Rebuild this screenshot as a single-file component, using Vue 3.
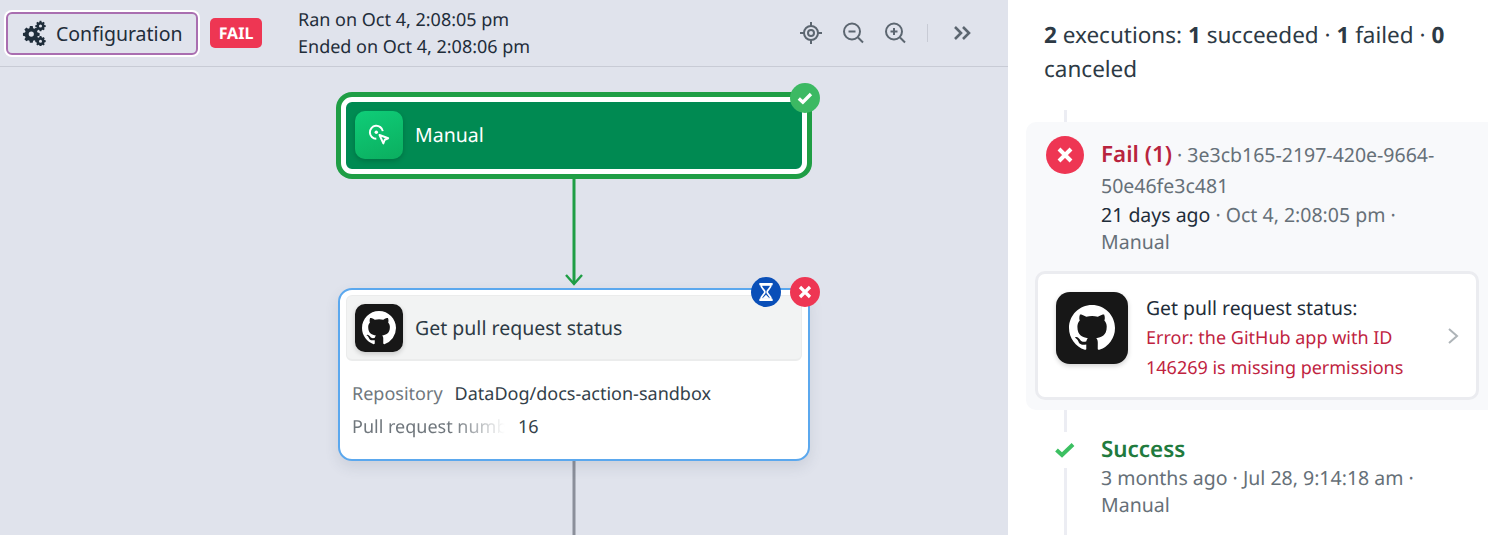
<template>
  <div class="page">
    <div class="left">
      <div class="topbar">
        <button class="config-btn">
          <svg width="26" height="26" viewBox="0 0 24 24" fill="#1f2d3a">
            <path fill-rule="evenodd" d="M8.2 5.6h2.6l.4 1.9 1.2.5 1.6-1.1 1.9 1.9-1.1 1.6.5 1.2 1.9.4v2.6l-1.9.4-.5 1.2 1.1 1.6-1.9 1.9-1.6-1.1-1.2.5-.4 1.9H8.2l-.4-1.9-1.2-.5-1.6 1.1-1.9-1.9 1.1-1.6-.5-1.2-1.9-.4v-2.6l1.9-.4.5-1.2L3.1 8.8 5 6.9l1.6 1.1 1.2-.5zM9.5 10.6a2.4 2.4 0 1 0 0 4.8 2.4 2.4 0 0 0 0-4.8z" />
            <path fill-rule="evenodd" d="M17.2.8h1.6l.3 1.2.7.3 1-.6 1.1 1.1-.6 1 .3.7 1.2.3v1.6l-1.2.3-.3.7.6 1-1.1 1.1-1-.6-.7.3-.3 1.2h-1.6l-.3-1.2-.7-.3-1 .6-1.1-1.1.6-1-.3-.7-1.2-.3V4.8l1.2-.3.3-.7-.6-1 1.1-1.1 1 .6.7-.3zM18 4.2a1.4 1.4 0 1 0 0 2.8 1.4 1.4 0 0 0 0-2.8z" />
            <path fill-rule="evenodd" d="M17.2 14.8h1.6l.3 1.2.7.3 1-.6 1.1 1.1-.6 1 .3.7 1.2.3v1.6l-1.2.3-.3.7.6 1-1.1 1.1-1-.6-.7.3-.3.7h-1.6l-.3-.7-.7-.3-1 .6-1.1-1.1.6-1-.3-.7-1.2-.3v-1.6l1.2-.3.3-.7-.6-1 1.1-1.1 1 .6.7-.3zM18 18.2a1.4 1.4 0 1 0 0 2.8 1.4 1.4 0 0 0 0-2.8z" />
          </svg>
          <span>Configuration</span>
        </button>
        <span class="fail-tag">FAIL</span>
        <div class="times">
          <div>Ran on Oct 4, 2:08:05 pm</div>
          <div>Ended on Oct 4, 2:08:06 pm</div>
        </div>
        <div class="tools">
          <svg width="24" height="24" viewBox="0 0 24 24" fill="none" stroke="#5c6670" stroke-width="2">
            <circle cx="12" cy="12" r="7" />
            <circle cx="12" cy="12" r="3" />
            <path d="M12 1v4M12 19v4M1 12h4M19 12h4" />
          </svg>
          <svg width="24" height="24" viewBox="0 0 24 24" fill="none" stroke="#5c6670" stroke-width="2">
            <circle cx="11" cy="10.5" r="8" />
            <path d="M7.5 10.5h7M17 16.5l5 5" />
          </svg>
          <svg width="24" height="24" viewBox="0 0 24 24" fill="none" stroke="#5c6670" stroke-width="2">
            <circle cx="11" cy="10.5" r="8" />
            <path d="M7.5 10.5h7M11 7v7M17 16.5l5 5" />
          </svg>
          <span class="tool-sep"></span>
          <svg width="20" height="20" viewBox="0 0 20 20" fill="none" stroke="#5c6670" stroke-width="2.6">
            <path d="M3 4l6 6-6 6M11 4l6 6-6 6" />
          </svg>
        </div>
      </div>

      <div class="canvas">
        <svg class="edges" width="1008" height="468" viewBox="0 0 1008 468">
          <path d="M574 111v105" stroke="#1f9e45" stroke-width="3" fill="none" />
          <path d="M566 208l8 9 8-9" stroke="#1f9e45" stroke-width="2.4" fill="none" />
          <path d="M574 393v75" stroke="#8b8f9a" stroke-width="3" fill="none" />
        </svg>

        <div class="node trigger">
          <div class="trigger-inner">
            <div class="app-icon green">
              <svg width="26" height="26" viewBox="0 0 24 24" fill="none" stroke="#fff" stroke-width="1.8">
                <path d="M9.5 15.5a6 6 0 1 1 6-7" />
                <circle cx="9.5" cy="9.5" r="1.6" fill="#fff" stroke="none" />
                <path d="M12.5 12l8 3-3.2 1.4-1.3 3.4z" stroke-linejoin="round" />
              </svg>
            </div>
            <span>Manual</span>
          </div>
          <span class="badge check">
            <svg width="18" height="18" viewBox="0 0 16 16" fill="none" stroke="#fff" stroke-width="3">
              <path d="M2.5 8.5l3.6 3.2 7.2-7.2" />
            </svg>
          </span>
        </div>

        <div class="node action">
          <div class="action-head">
            <div class="app-icon dark">
              <svg width="34" height="34" viewBox="0 0 16 16" fill="#fff">
                <path d="M8 0C3.58 0 0 3.58 0 8c0 3.54 2.29 6.53 5.47 7.59.4.07.55-.17.55-.38 0-.19-.01-.82-.01-1.49-2.01.37-2.53-.49-2.69-.94-.09-.23-.48-.94-.82-1.13-.28-.15-.68-.52-.01-.53.63-.01 1.08.58 1.23.82.72 1.21 1.87.87 2.33.66.07-.52.28-.87.51-1.07-1.78-.2-3.64-.89-3.64-3.95 0-.87.31-1.59.82-2.15-.08-.2-.36-1.02.08-2.12 0 0 .67-.21 2.2.82.64-.18 1.32-.27 2-.27s1.36.09 2 .27c1.53-1.04 2.2-.82 2.2-.82.44 1.1.16 1.92.08 2.12.51.56.82 1.27.82 2.15 0 3.07-1.87 3.75-3.65 3.95.29.25.54.73.54 1.48 0 1.07-.01 1.93-.01 2.2 0 .21.15.46.55.38A8.01 8.01 0 0 0 16 8c0-4.42-3.58-8-8-8z" />
              </svg>
            </div>
            <span>Get pull request status</span>
          </div>
          <div class="params">
            <div class="param">
              <span class="param-key">Repository</span>
              <span class="param-val">DataDog/docs-action-sandbox</span>
            </div>
            <div class="param">
              <span class="param-key faded">Pull request number</span>
              <span class="param-val">16</span>
            </div>
          </div>
          <span class="badge wait">
            <svg width="20" height="20" viewBox="0 0 18 18" fill="none" stroke="#fff" stroke-width="2">
              <path d="M3 2h12M3 16h12" />
              <path d="M4.5 2.5c0 3.5 3.5 4.5 3.5 6.5s-3.5 3-3.5 6.5h9c0-3.5-3.5-4.5-3.5-6.5s3.5-3 3.5-6.5z" stroke-width="1.6" />
              <path d="M5.5 15L9 11.5l3.5 3.5z" fill="#fff" stroke="none" />
            </svg>
          </span>
          <span class="badge err">
            <svg width="16" height="16" viewBox="0 0 16 16" fill="none" stroke="#fff" stroke-width="3.2">
              <path d="M3 3l10 10M13 3L3 13" />
            </svg>
          </span>
        </div>
      </div>
    </div>

    <div class="right">
      <span class="rail"></span>
      <h2 class="summary"><b>2</b> executions: <b>1</b> succeeded · <b>1</b> failed · <b>0</b> canceled</h2>

      <section class="run failed">
        <div class="run-row">
          <span class="status-dot">
            <svg width="20" height="20" viewBox="0 0 16 16" fill="none" stroke="#fff" stroke-width="3.2">
              <path d="M3.2 3.2l9.6 9.6M12.8 3.2l-9.6 9.6" />
            </svg>
          </span>
          <div class="run-text failed-text">
            <div class="id-line"><b class="red">Fail (1)</b> · 3e3cb165-2197-420e-9664-50e46fe3c481</div>
            <div class="when"><span class="dark-text">21 days ago</span> · Oct 4, 2:08:05 pm · Manual</div>
          </div>
        </div>
        <div class="err-card">
          <div class="err-icon">
            <svg width="46" height="46" viewBox="0 0 16 16" fill="#fff">
              <path d="M8 0C3.58 0 0 3.58 0 8c0 3.54 2.29 6.53 5.47 7.59.4.07.55-.17.55-.38 0-.19-.01-.82-.01-1.49-2.01.37-2.53-.49-2.69-.94-.09-.23-.48-.94-.82-1.13-.28-.15-.68-.52-.01-.53.63-.01 1.08.58 1.23.82.72 1.21 1.87.87 2.33.66.07-.52.28-.87.51-1.07-1.78-.2-3.64-.89-3.64-3.95 0-.87.31-1.59.82-2.15-.08-.2-.36-1.02.08-2.12 0 0 .67-.21 2.2.82.64-.18 1.32-.27 2-.27s1.36.09 2 .27c1.53-1.04 2.2-.82 2.2-.82.44 1.1.16 1.92.08 2.12.51.56.82 1.27.82 2.15 0 3.07-1.87 3.75-3.65 3.95.29.25.54.73.54 1.48 0 1.07-.01 1.93-.01 2.2 0 .21.15.46.55.38A8.01 8.01 0 0 0 16 8c0-4.42-3.58-8-8-8z" />
            </svg>
          </div>
          <div class="err-text">
            <div class="err-title">Get pull request status:</div>
            <div class="err-msg">Error: the GitHub app with ID 146269 is missing permissions</div>
          </div>
          <svg class="chev" width="14" height="20" viewBox="0 0 14 20" fill="none" stroke="#aeb4b8" stroke-width="2">
            <path d="M3 3l8 7-8 7" />
          </svg>
        </div>
      </section>

      <section class="run ok">
        <div class="run-row">
          <span class="status-check">
            <svg width="20" height="16" viewBox="0 0 20 16" fill="none" stroke="#3cc062" stroke-width="4">
              <path d="M1.5 8l5.5 5 11-10.5" />
            </svg>
          </span>
          <div class="run-text">
            <div class="success">Success</div>
            <div>3 months ago · Jul 28, 9:14:18 am · Manual</div>
          </div>
        </div>
      </section>
    </div>
  </div>
</template>

<script setup>
</script>

<style>
html, body {
  margin: 0;
  overflow: hidden;
}
</style>

<style scoped>
.page {
  display: flex;
  width: 1488px;
  height: 535px;
  overflow: hidden;
  font-family: "Noto Sans", sans-serif;
  color: #1f2d3a;
  background: #fff;
  text-rendering: geometricPrecision;
}
.left {
  width: 1008px;
  flex-shrink: 0;
  background: #e0e3ec;
}
.topbar {
  display: flex;
  align-items: center;
  height: 66px;
  padding: 0 0 0 6px;
  border-bottom: 1px solid #c8cbd5;
}
.config-btn {
  display: flex;
  align-items: center;
  gap: 9px;
  width: 192px;
  height: 43px;
  margin-right: 12px;
  padding: 0 0 0 13px;
  box-sizing: border-box;
  border: 2px solid #a96eb0;
  border-radius: 6px;
  box-shadow: 0 0 0 2px #fff;
  background: #e0e3ec;
  color: #1f2d3a;
  font: 19.5px "Noto Sans", sans-serif;
}
.fail-tag {
  width: 52px;
  height: 30px;
  line-height: 30px;
  text-align: center;
  border-radius: 5px;
  background: #ee3653;
  color: #fff;
  font-size: 16px;
  font-weight: 700;
}
.times {
  margin-left: 36px;
  padding-top: 2px;
  font-size: 18px;
  line-height: 27px;
}
.tools {
  display: flex;
  align-items: center;
  gap: 18px;
  margin-left: auto;
  margin-right: 36px;
}
.tool-sep {
  width: 1px;
  height: 18px;
  background: #c8cbd5;
  margin: 0 6px 0 2px;
}
.canvas {
  position: relative;
  height: 468px;
}
.edges {
  position: absolute;
  left: 0;
  top: 0;
}
.node {
  position: absolute;
  box-sizing: border-box;
}
.trigger {
  left: 336px;
  top: 25px;
  width: 476px;
  height: 87px;
  padding: 5px;
  border-radius: 16px;
  background: #1f9e45;
}
.trigger-inner {
  display: flex;
  align-items: center;
  gap: 12px;
  height: 100%;
  padding-left: 9px;
  padding-bottom: 2px;
  box-sizing: border-box;
  border: 5px solid #fff;
  border-radius: 11px;
  background: #008a52;
  color: #fff;
  font-size: 19.5px;
}
.app-icon {
  display: flex;
  align-items: center;
  justify-content: center;
  width: 48px;
  height: 48px;
  flex-shrink: 0;
  border-radius: 10px;
  box-shadow: 0 2px 5px rgba(0, 0, 0, 0.18);
}
.app-icon.green {
  background: linear-gradient(160deg, #0fcd78, #0bae5f);
}
.app-icon.dark {
  background: #171717;
}
.badge {
  position: absolute;
  display: flex;
  align-items: center;
  justify-content: center;
  width: 30px;
  height: 30px;
  border-radius: 50%;
}
.badge.check {
  right: -8px;
  top: -9px;
  background: #3cb963;
}
.badge.wait {
  right: 27px;
  top: -13px;
  background: #0a4fb8;
}
.badge.err {
  right: -12px;
  top: -13px;
  background: #ee3653;
}
.action {
  left: 338px;
  top: 221px;
  width: 472px;
  height: 173px;
  padding: 5px 6px;
  border: 2px solid #5ba8ee;
  border-radius: 14px;
  background: #fff;
  box-shadow: 0 6px 14px rgba(60, 70, 100, 0.12);
}
.action-head {
  display: flex;
  align-items: center;
  gap: 12px;
  height: 66px;
  padding-left: 8px;
  box-sizing: border-box;
  border: 1px solid #ebecec;
  border-bottom-width: 2px;
  border-radius: 6px;
  background: #f2f3f3;
  color: #2d3a45;
  font-size: 19.5px;
}
.params {
  padding: 17px 0 0 6px;
  font-size: 18px;
  line-height: 33px;
}
.param {
  display: flex;
}
.param-key {
  flex-shrink: 0;
  margin-right: 12px;
  color: #70777d;
}
.param-key.faded {
  width: 156px;
  margin-right: 10px;
  overflow: hidden;
  white-space: nowrap;
  -webkit-mask-image: linear-gradient(90deg, #000 65%, transparent 98%);
  mask-image: linear-gradient(90deg, #000 65%, transparent 98%);
}
.param-val {
  color: #333f4a;
}
.right {
  position: relative;
  flex: 1;
  min-width: 0;
}
.rail {
  position: absolute;
  left: 56px;
  top: 110px;
  bottom: 0;
  width: 3px;
  background: #ecedf3;
}
.summary {
  position: relative;
  margin: 0;
  padding: 18px 36px 0 36px;
  font-size: 22.5px;
  font-weight: 400;
  line-height: 34px;
  color: #2d3a45;
}
.summary b {
  font-weight: 700;
}
.run {
  position: relative;
}
.run.failed {
  margin: 36px 0 0 18px;
  height: 288px;
  padding: 14px 9px 0 9px;
  box-sizing: border-box;
  border-radius: 10px 0 0 10px;
  background: #f8f9fb;
}
.run.ok {
  margin: 24px 0 0 18px;
  padding-left: 9px;
}
.run-row {
  display: flex;
  padding-left: 11px;
  font-size: 19.5px;
  line-height: 27.5px;
  color: #667078;
}
.run.ok .run-row {
  line-height: 27px;
}
.status-dot,
.status-check {
  display: flex;
  align-items: center;
  justify-content: center;
  width: 38px;
  height: 38px;
  flex-shrink: 0;
  border-radius: 50%;
}
.status-dot {
  background: #ee3653;
}
.status-check {
  height: 36px;
  margin-top: -2px;
  border-radius: 0;
  background: #fff;
}
.run-text {
  margin-left: 17px;
  width: 345px;
}
.failed-text {
  padding-top: 2px;
}
.id-line {
  line-height: 31px;
}
.when {
  line-height: 27px;
}
.id-line b {
  font-size: 22.4px;
  font-weight: 600;
}
.red {
  color: #b8243e;
}
.dark-text {
  color: #1f2d3a;
}
.success {
  font-size: 22.4px;
  font-weight: 600;
  line-height: 30px;
  color: #217a3d;
}
.err-card {
  position: relative;
  display: flex;
  align-items: center;
  height: 129px;
  margin-top: 16px;
  padding: 0 18px;
  box-sizing: border-box;
  border: 3px solid #ebecf0;
  border-radius: 10px;
  background: #fff;
}
.err-icon {
  display: flex;
  align-items: center;
  justify-content: center;
  align-self: flex-start;
  width: 72px;
  height: 72px;
  margin-top: 18px;
  flex-shrink: 0;
  border-radius: 14px;
  background: #171717;
  box-shadow: 0 2px 5px rgba(0, 0, 0, 0.18);
}
.err-text {
  width: 280px;
  margin-left: 18px;
  padding-top: 5px;
  line-height: 30px;
}
.err-title {
  font-size: 19.4px;
  color: #1f2d3a;
}
.err-msg {
  font-size: 18px;
  color: #c0233f;
}
.chev {
  margin-left: auto;
  margin-right: -2px;
}
</style>
